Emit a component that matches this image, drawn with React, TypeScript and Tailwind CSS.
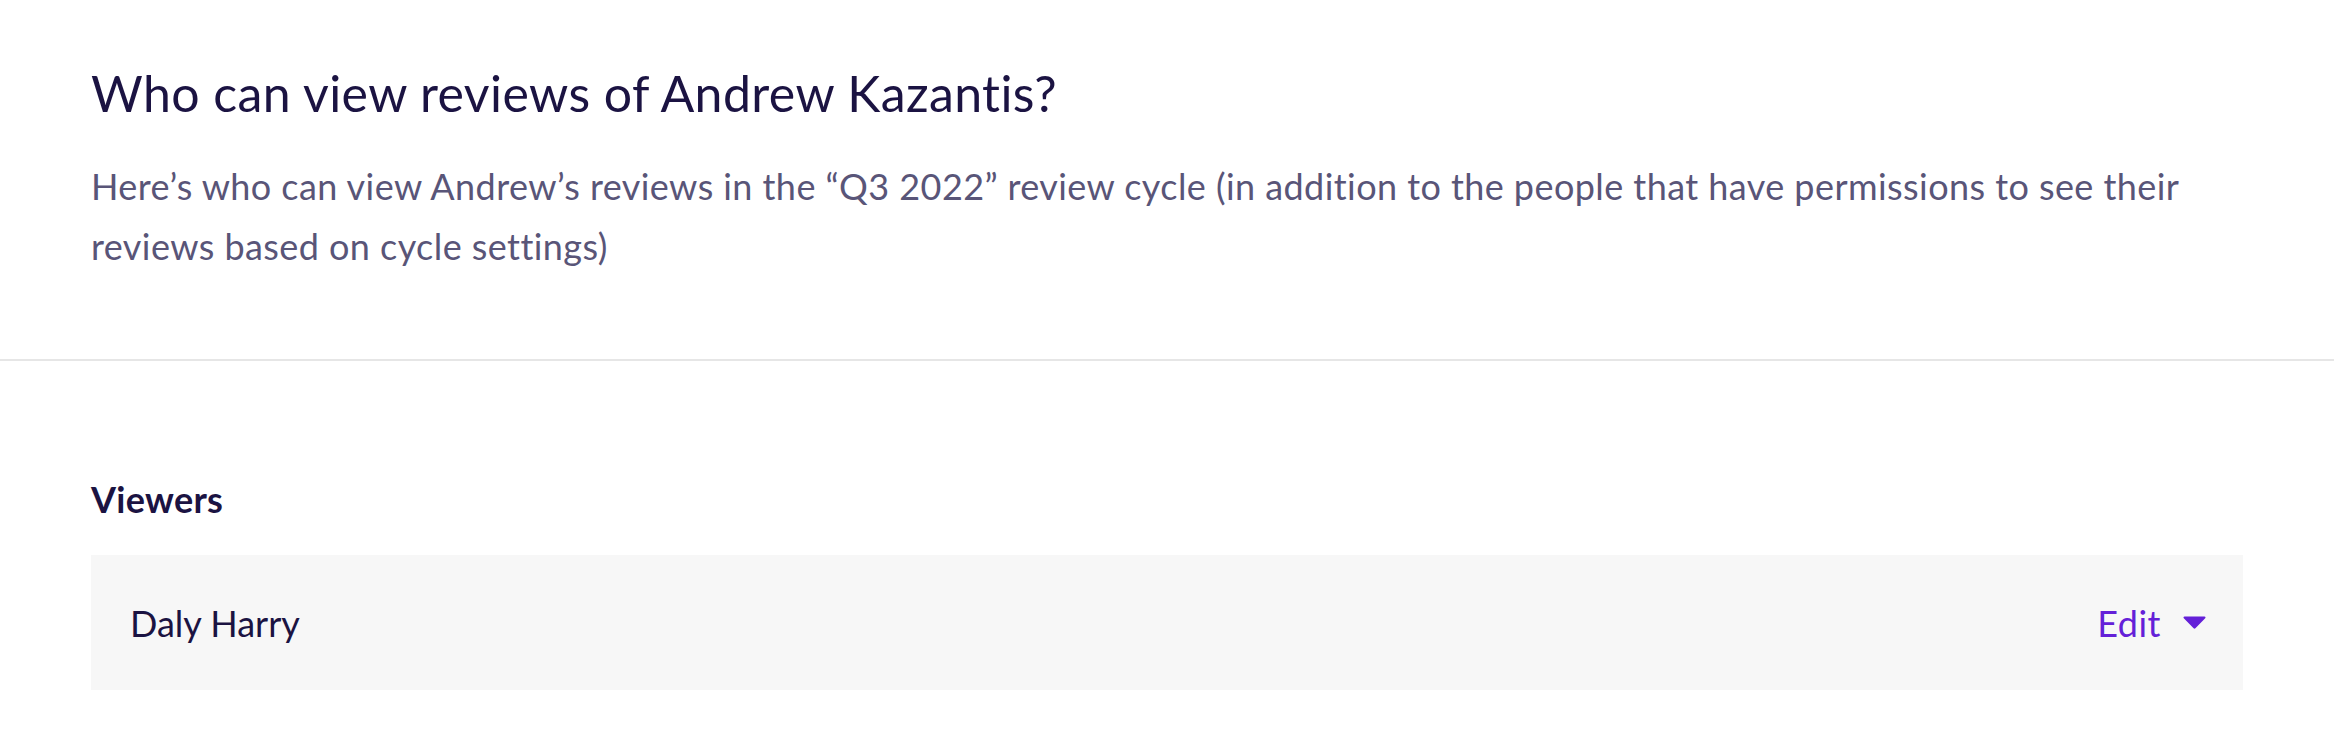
// Review visibility: who can see a person's reviews in a cycle

const viewers = ['Daly Harry'];

function CaretDown() {
  return (
    <svg width="23" height="13" viewBox="0 0 23 13" className="shrink-0">
      <path d="M1.5 0.5h20a1 1 0 0 1 .7 1.7l-9.8 10a1.3 1.3 0 0 1-1.8 0l-9.8-10A1 1 0 0 1 1.5 0.5z" fill="#6420d8" />
    </svg>
  );
}

function ViewerRow({ name }: { name: string }) {
  return (
    <div className="flex h-[135px] items-center justify-between bg-[#f7f7f7] pl-[39px] pr-[37px]">
      <span className="text-[36px] text-[#1b1342]">{name}</span>
      <button className="flex items-center gap-[22px] text-[36px] tracking-[0.5px] text-[#6420d8]">
        Edit
        <CaretDown />
      </button>
    </div>
  );
}

export default function App() {
  return (
    <div className="min-h-screen bg-white font-['Lato',sans-serif]">
      {/* Header */}
      <div className="border-b-2 border-[#e6e6e6] px-[91px] pb-[83px] pt-[63px]">
        <h1 className="text-[50px] leading-[60px] tracking-[0.4px] text-[#1b1342]">
          Who can view reviews of Andrew Kazantis?
        </h1>
        <p className="mt-[33px] text-[36px] leading-[60px] tracking-[0.43px] text-[#595578]">
          Here’s who can view Andrew’s reviews in the “Q3 2022” review cycle (in addition to the people that have permissions to see their reviews based on cycle settings)
        </p>
      </div>

      {/* Viewers */}
      <div className="px-[91px] pt-[116px]">
        <h2 className="mb-[34px] text-[36px] font-bold leading-[44px] tracking-[0.3px] text-[#1b1342]">Viewers</h2>
        {viewers.map((v) => (
          <ViewerRow key={v} name={v} />
        ))}
      </div>
    </div>
  );
}
